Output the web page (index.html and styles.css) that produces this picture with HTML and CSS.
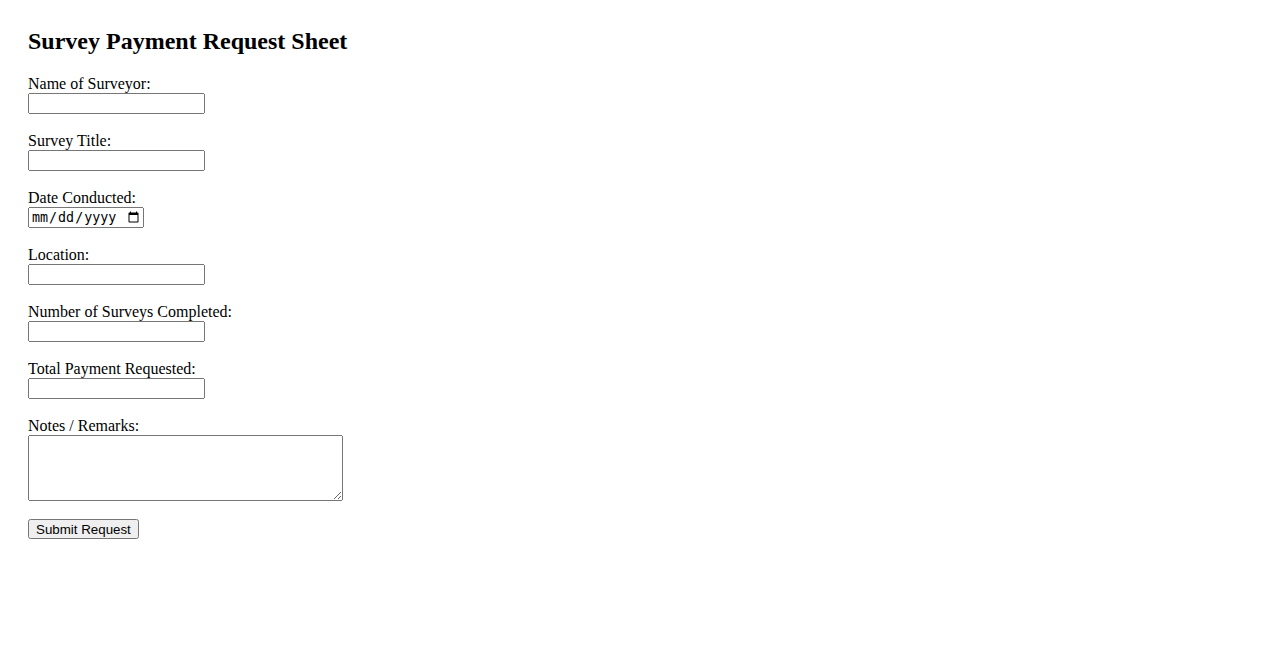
FILE: index.html
```html
<!DOCTYPE html>
<html>
<head>
<meta charset="utf-8">
<title>Survey Payment Request Sheet</title>
<link rel="stylesheet" href="styles.css">
</head>
<body>
<h2 class="title">Survey Payment Request Sheet</h2>
<form class="form">
  <div class="field">
    <label class="label" for="name">Name of Surveyor:</label>
    <input class="input" type="text" id="name">
  </div>
  <div class="field">
    <label class="label" for="title">Survey Title:</label>
    <input class="input" type="text" id="title">
  </div>
  <div class="field">
    <label class="label" for="date">Date Conducted:</label>
    <input class="input date" type="date" id="date">
  </div>
  <div class="field">
    <label class="label" for="loc">Location:</label>
    <input class="input" type="text" id="loc">
  </div>
  <div class="field">
    <label class="label" for="num">Number of Surveys Completed:</label>
    <input class="input" type="number" id="num">
  </div>
  <div class="field">
    <label class="label" for="pay">Total Payment Requested:</label>
    <input class="input" type="text" id="pay">
  </div>
  <div class="field">
    <label class="label" for="notes">Notes / Remarks:</label>
    <textarea class="textarea" id="notes" rows="4" cols="40"></textarea>
  </div>
  <button class="submit" type="submit">Submit Request</button>
</form>
</body>
</html>
```
FILE: styles.css
```css
html, body {
  background: #ffffff;
}
body {
  margin: 0;
  padding: 28px;
  font-family: "Liberation Serif", "Times New Roman", serif;
  font-size: 16px;
  color: #000;
}
.title {
  margin: 0 0 20px 0;
  font-size: 24px;
  font-weight: bold;
}
.field {
  margin-bottom: 18px;
}
.label {
  display: block;
}
.input {
  width: 177px;
  height: 21px;
  box-sizing: border-box;
}
.input.date {
  width: 116px;
}
.textarea {
  display: block;
  width: 315px;
  height: 66px;
  box-sizing: border-box;
}
.submit {
  height: 20px;
  font-family: "Liberation Sans", Arial, sans-serif;
}
```
